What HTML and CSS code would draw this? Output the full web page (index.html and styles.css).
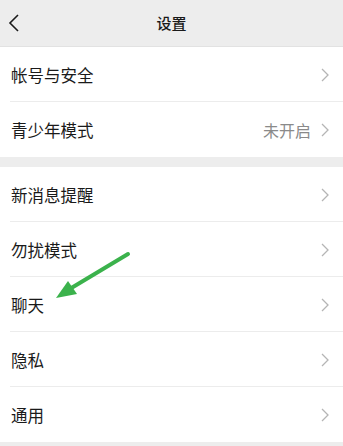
FILE: index.html
```html
<!DOCTYPE html>
<html lang="zh-CN">
<head>
  <meta charset="UTF-8" />
  <meta name="viewport" content="width=device-width, initial-scale=1.0" />
  <title>设置</title>
  <link rel="stylesheet" href="styles.css">
</head>
<body>
  <div class="header">
    <svg class="back" width="12" height="20" viewBox="0 0 12 20"><polyline points="10,2 2,10 10,18" fill="none" stroke="#1a1a1a" stroke-width="1.6"/></svg>
    <div class="title">设置</div>
  </div>

  <div class="group">
    <div class="row"><span class="label">帐号与安全</span><span class="right"><svg class="chev" width="8" height="14" viewBox="0 0 8 14"><polyline points="1,1 7,7 1,13" fill="none" stroke="#b5b5b5" stroke-width="1.3"/></svg></span></div>
    <div class="row last"><span class="label">青少年模式</span><span class="right"><span class="value">未开启</span><svg class="chev" width="8" height="14" viewBox="0 0 8 14"><polyline points="1,1 7,7 1,13" fill="none" stroke="#b5b5b5" stroke-width="1.3"/></svg></span></div>
  </div>

  <div class="group">
    <div class="row"><span class="label">新消息提醒</span><span class="right"><svg class="chev" width="8" height="14" viewBox="0 0 8 14"><polyline points="1,1 7,7 1,13" fill="none" stroke="#b5b5b5" stroke-width="1.3"/></svg></span></div>
    <div class="row"><span class="label">勿扰模式</span><span class="right"><svg class="chev" width="8" height="14" viewBox="0 0 8 14"><polyline points="1,1 7,7 1,13" fill="none" stroke="#b5b5b5" stroke-width="1.3"/></svg></span></div>
    <div class="row"><span class="label">聊天</span><span class="right"><svg class="chev" width="8" height="14" viewBox="0 0 8 14"><polyline points="1,1 7,7 1,13" fill="none" stroke="#b5b5b5" stroke-width="1.3"/></svg></span></div>
    <div class="row"><span class="label">隐私</span><span class="right"><svg class="chev" width="8" height="14" viewBox="0 0 8 14"><polyline points="1,1 7,7 1,13" fill="none" stroke="#b5b5b5" stroke-width="1.3"/></svg></span></div>
    <div class="row last"><span class="label">通用</span><span class="right"><svg class="chev" width="8" height="14" viewBox="0 0 8 14"><polyline points="1,1 7,7 1,13" fill="none" stroke="#b5b5b5" stroke-width="1.3"/></svg></span></div>
  </div>

  <!-- annotation arrow pointing at 聊天 -->
  <svg class="arrow" width="343" height="446" viewBox="0 0 343 446">
    <line x1="128" y1="254" x2="68" y2="290" stroke="#3bb24c" stroke-width="4" stroke-linecap="round"/>
    <polygon points="56,298 68,281 77,294" fill="#3bb24c"/>
  </svg>
</body>
</html>
```

FILE: styles.css
```css
* { box-sizing: border-box; }
body {
  margin: 0;
  padding: 0;
  background: #ededed;
  font-family: 'Noto Sans CJK SC', 'Noto Sans', sans-serif;
  color: #1a1a1a;
  width: 343px;
  height: 446px;
  overflow: hidden;
  position: relative;
}
.header {
  height: 47px;
  display: flex;
  align-items: center;
  justify-content: center;
  position: relative;
  border-bottom: 1px solid #e2e2e2;
}
.back {
  position: absolute;
  left: 8px;
  top: 13px;
}
.title {
  font-size: 15px;
  font-weight: 500;
  margin-top: -2px;
}
.group {
  background: #fff;
  margin-bottom: 10px;
}
.row {
  height: 55px;
  display: flex;
  align-items: center;
  justify-content: space-between;
  padding: 0 14px 0 11px;
  position: relative;
}
.row::after {
  content: '';
  position: absolute;
  left: 10px;
  right: 0;
  bottom: 0;
  height: 1px;
  background: #ececec;
}
.row.last::after { display: none; }
.label {
  font-size: 16.5px;
}
.right {
  display: flex;
  align-items: center;
  gap: 10px;
}
.value {
  font-size: 16px;
  color: #8a8a8a;
}
.arrow {
  position: absolute;
  left: 0;
  top: 0;
  pointer-events: none;
}
```
